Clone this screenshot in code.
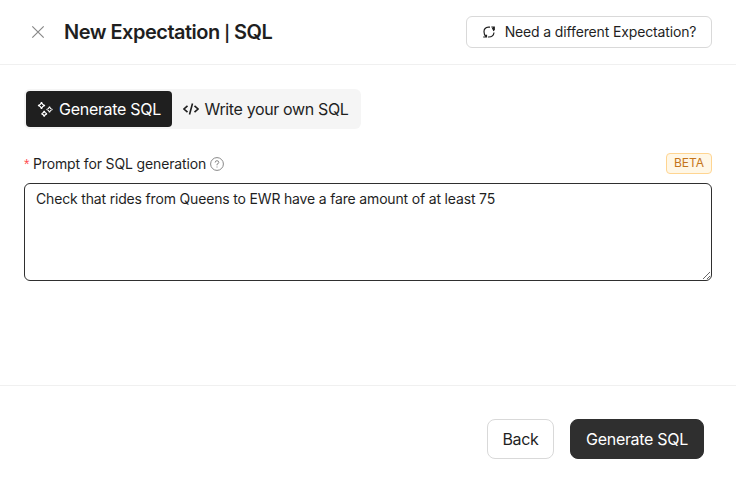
<div class="modal">
  <header>
    <div class="heading">
      <svg class="close" width="16" height="16" viewBox="0 0 16 16"><path d="M2.300 2.300l11.400 11.400M13.700 2.300L2.300 13.700" /></svg>
      <h1>New Expectation <span class="bar">|</span> SQL</h1>
    </div>
    <button class="different">
      <svg width="14" height="14" viewBox="0 0 14 14"><path d="M8 2.200H6.500Q2 2.500 2 6.800Q2 9.700 3.800 11.200M1.200 12H4.500V9.800M6 12Q11.500 12.300 12 7.500M9.300 2H12.300V5M12.300 2L10.300 4M10.300 3.200Q11.500 4.200 11.900 6" /></svg>
      <span>Need a different Expectation?</span>
    </button>
  </header>
  <main>
    <div class="tabs">
      <button class="tab active">
        <svg width="16" height="16" viewBox="0 0 16 16"><path d="M4.500 1Q5 4 8 4.500Q5 5 4.500 8Q4 5 1 4.500Q4 4 4.500 1ZM12.500 5.500Q13 8 15.500 8.500Q13 9 12.500 11.500Q12 9 9.500 8.500Q12 8 12.500 5.500ZM7.200 10Q7.700 12.300 10 12.800Q7.700 13.300 7.200 15.500Q6.700 13.300 4.500 12.800Q6.700 12.300 7.200 10Z" /></svg>
        <span>Generate SQL</span>
      </button>
      <button class="tab own">
        <svg class="code" width="16" height="16" viewBox="0 0 16 16"><path d="M4.500 4.800L1 8l3.500 3.200M11.500 4.800L15 8l-3.500 3.200M9.500 2.500l-3 11" /></svg>
        <span>Write your own SQL</span>
      </button>
    </div>
    <div class="label-row">
      <label for="prompt"><span class="star">*</span><span class="label">Prompt for SQL generation</span>
        <svg width="14" height="14" viewBox="0 0 14 14"><circle cx="7" cy="7" r="6.400" /><path d="M5.200 5.500Q5.200 3.700 7 3.700T8.800 5.500Q8.800 6.500 7 7.200V8.300M7 9.500v1" /></svg>
      </label>
      <span class="beta">BETA</span>
    </div>
    <textarea id="prompt" spellcheck="false">Check that rides from Queens to EWR have a fare amount of at least 75</textarea>
  </main>
  <footer><button class="back"><span>Back</span></button><button class="generate"><span>Generate SQL</span></button></footer>
</div>

<style>
  :global(body) { margin: 0; overflow: hidden; }
  .modal, .modal * { box-sizing: border-box; }
  .modal { height: 481px; display: flex; flex-direction: column; background: #fff; color: #1f1f1f; font-family: Inter, sans-serif; }
  button { font-family: inherit; color: inherit; background: #fff; border: 1px solid #d9d9d9; padding: 0; display: flex; align-items: center; justify-content: center; white-space: nowrap; }
  svg { fill: none; stroke: currentColor; stroke-width: 1.2; flex: none; }
  header { height: 65px; border-bottom: 1px solid #f0f0f0; padding: 0 24px; display: flex; align-items: center; justify-content: space-between; }
  .heading { display: flex; align-items: center; gap: 18px; padding-left: 6px; }
  .close { color: #888; }
  h1 { font-size: 20px; font-weight: 600; margin: 0; letter-spacing: -.51px; white-space: nowrap; }
  .bar { font-size: 16px; }
  .different { width: 246px; height: 32px; border-radius: 6px; font-size: 14px; gap: 9px; }
  .different span { letter-spacing: -.14px; padding-bottom: 2px; }
  main { flex: 1; padding: 24px; }
  .tabs { width: 337px; height: 40px; border-radius: 6px; padding: 2px; background: #f5f5f5; display: flex; }
  .tab { width: 146px; height: 36px; border: 0; background: none; font-size: 16px; gap: 6px; border-radius: 4px; letter-spacing: -.31px; }
  .tab.own { width: 187px; letter-spacing: -.36px; }
  .tab.active { background: #1f1f1f; color: #fff; }
  .code { stroke-width: 1.6; }
  .label-row { height: 22px; margin-top: 24px; display: flex; align-items: center; justify-content: space-between; }
  label { display: flex; align-items: center; font-size: 14px; gap: 4px; letter-spacing: -.14px; }
  .label { padding-bottom: 2px; }
  label svg { color: #888; stroke-width: 1; }
  .star { color: #ff4d4f; font: 14px/1 "Liberation Sans", sans-serif; width: 5px; }
  .beta { border: 1px solid #ffd591; background: #fff7e6; color: #c4741a; font-size: 12px; line-height: 17px; height: 21px; padding: 0 7px; border-radius: 4px; margin-top: -2px; }
  textarea { display: block; width: 688px; height: 98px; margin-top: 8px; border: 1px solid #2f2f2f; border-radius: 6px; font: 14px/22px Inter, sans-serif; letter-spacing: -.17px; color: #1f1f1f; padding: 4px 11px; resize: vertical; outline: 0; }
  footer { height: 96px; border-top: 1px solid #f0f0f0; padding: 10px 32px 0; display: flex; align-items: center; justify-content: flex-end; gap: 16px; }
  footer button { height: 40px; border-radius: 8px; font-size: 16px; letter-spacing: -.31px; }
  .back { width: 67px; }
  .generate { width: 134px; background: #2f2f2f; border-color: #2f2f2f; color: #fff; }
</style>
